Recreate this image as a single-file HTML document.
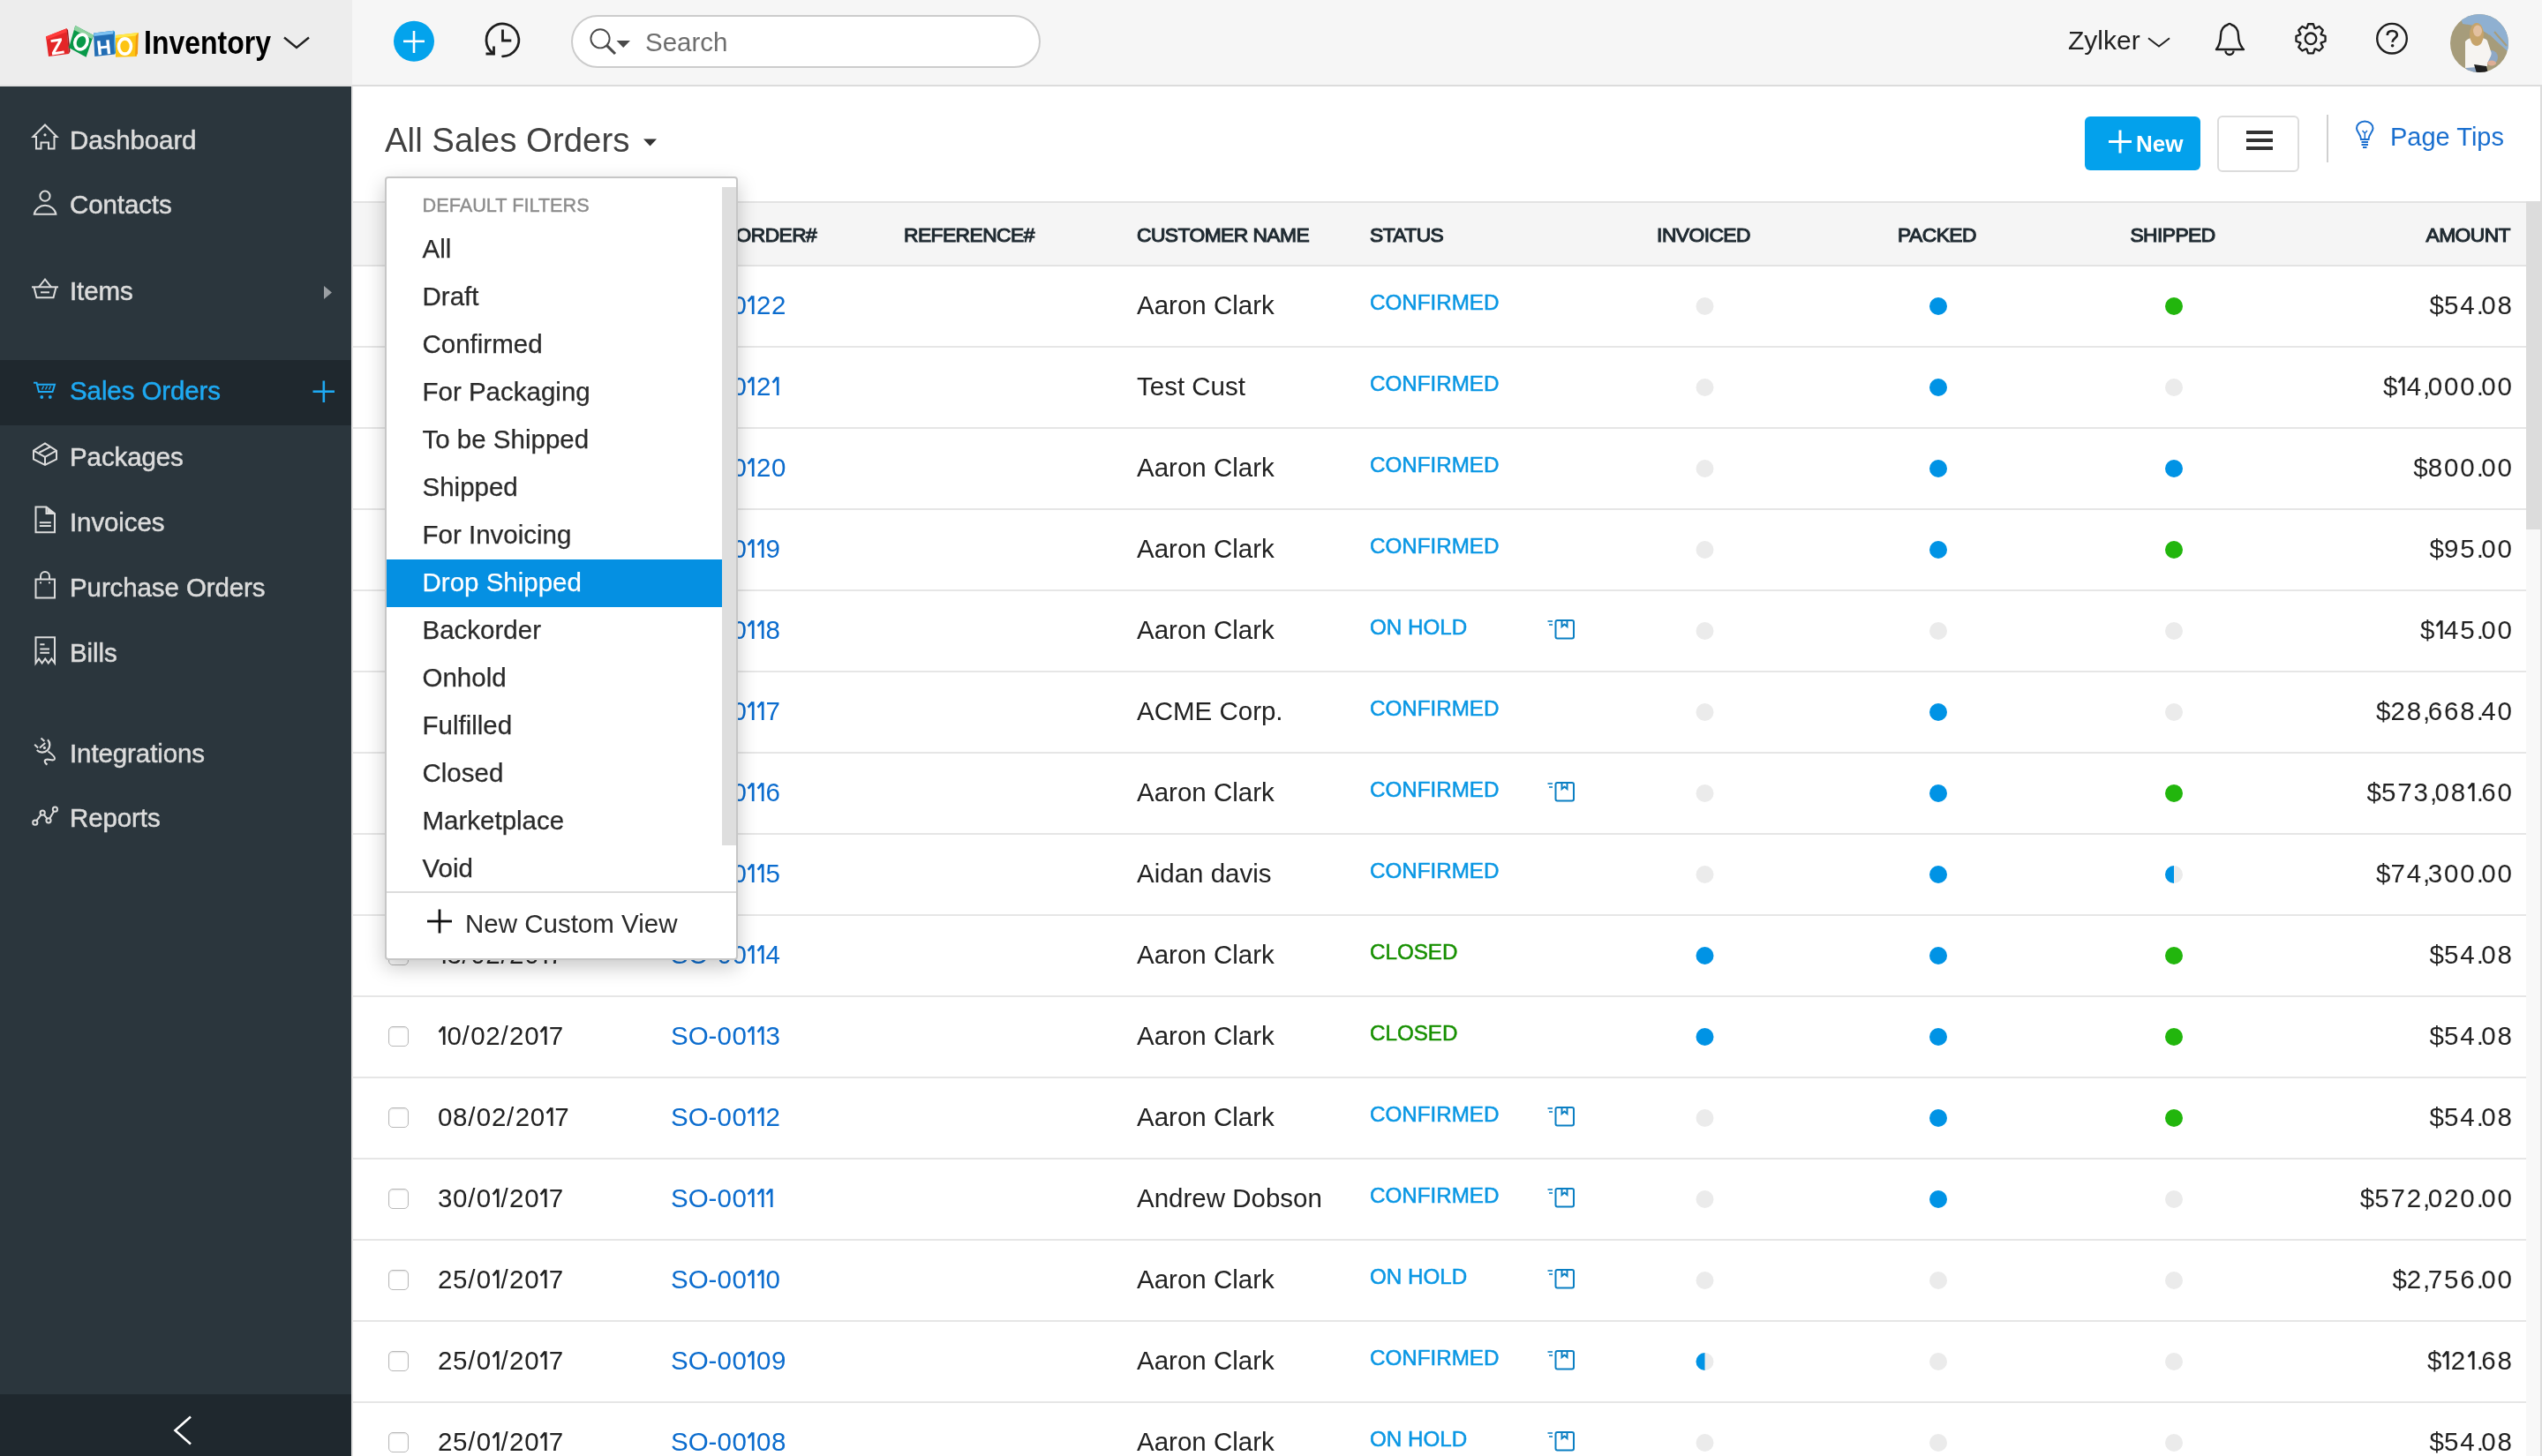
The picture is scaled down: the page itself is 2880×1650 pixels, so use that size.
<!DOCTYPE html>
<html><head><meta charset="utf-8"><title>Sales Orders</title>
<style>
html,body{margin:0;padding:0;width:2880px;height:1650px;overflow:hidden;background:#fff;font-family:"Liberation Sans", sans-serif;}
.t{position:absolute;line-height:1;white-space:nowrap;}
svg{overflow:visible}
</style></head><body>
<div style="position:absolute;left:0;top:0;width:2880px;height:1650px;will-change:transform">

<div style="position:absolute;left:0px;top:0px;width:2880px;height:97px;background:#f6f6f6;"></div>
<div style="position:absolute;left:0px;top:0px;width:399px;height:97px;background:#ededed;"></div>
<div style="position:absolute;left:399px;top:96px;width:2481px;height:2px;background:#dcdcdc;"></div>
<div style="position:absolute;left:0px;top:96px;width:399px;height:2px;background:#e2e2e2;"></div>
<svg style="position:absolute;left:0;top:0;" width="2880" height="1650" viewBox="0 0 2880 1650">
<g>
<polygon points="52,41.5 75.5,32.3 78,61 55,64" fill="#e42527"/>
<polygon points="52,41.5 75.5,32.3 76,36 53,45" fill="#ff3b3b"/>
<polygon points="75.5,32.3 78,61 79.5,58 77,34" fill="#9b1418"/>
<text x="56.5" y="61.5" font-family="Liberation Sans" font-weight="bold" font-size="25" fill="#fff" transform="rotate(-9 64 50)">Z</text>
<polygon points="85.3,29 106,40 97.6,64.7 78,54" fill="#089949"/>
<polygon points="85.3,29 106,40 104,44 84,34" fill="#8fd3a0"/>
<ellipse cx="92" cy="47.5" rx="6.8" ry="8.6" fill="none" stroke="#fff" stroke-width="3.6" transform="rotate(25 92 47.5)"/>
<polygon points="106,37.6 128.7,34.8 130,61.5 107.3,64" fill="#226db4"/>
<polygon points="106,37.6 128.7,34.8 128,38.5 106.5,41" fill="#7cc1f2"/>
<polygon points="128.7,34.8 130,61.5 131,60 130,36" fill="#0b8fe0"/>
<text x="109" y="61.5" font-family="Liberation Sans" font-weight="bold" font-size="23" fill="#fff" transform="rotate(-6 118 50)">H</text>
<polygon points="131,40 156.7,37 155,64 131,64.7" fill="#fdc414"/>
<polygon points="131,40 156.7,37 154,40.5 131,43" fill="#ffe84a"/>
<polygon points="154,40.5 156.7,37 156,61 153,64" fill="#f39b0f"/>
<ellipse cx="141.5" cy="52.5" rx="7" ry="8.6" fill="none" stroke="#fff" stroke-width="3.6"/>
</g></svg>
<div class="t" style="left:163px;top:33.80px;font-size:32px;color:#000;font-weight:bold;transform:scaleY(1.13);transform-origin:0 85%;">Inventory</div>
<svg style="position:absolute;left:0;top:0;" width="2880" height="1650" viewBox="0 0 2880 1650"><polyline points="322,42.5 336,54 350,42.5" fill="none" stroke="#222" stroke-width="2.4"/></svg>
<svg style="position:absolute;left:0;top:0;" width="2880" height="1650" viewBox="0 0 2880 1650"><circle cx="469" cy="46.8" r="23" fill="#03a3ec"/><rect x="457" y="45.5" width="24" height="2.6" fill="#fff"/><rect x="467.7" y="35" width="2.6" height="25" fill="#fff"/></svg>
<svg style="position:absolute;left:0;top:0;" width="2880" height="1650" viewBox="0 0 2880 1650"><g fill="none" stroke="#1e1e1e" stroke-width="2.8" stroke-linecap="round">
<path d="M569.5,63.8 A18.4,18.4 0 1 0 559.3,60.8"/>
<polyline points="569.5,33.5 569.5,46 579.3,46" stroke-linecap="butt"/>
<polyline points="550.5,61 559.5,61 559.5,52.5" stroke-linecap="butt"/>
</g></svg>
<div style="position:absolute;left:647px;top:17px;width:528px;height:56px;border:2px solid #cccccc;border-radius:30px;background:#fff"></div>
<svg style="position:absolute;left:0;top:0;" width="2880" height="1650" viewBox="0 0 2880 1650"><g fill="none" stroke="#4a4a4a" stroke-width="1.9"><circle cx="680" cy="43.8" r="10.6"/><line x1="687.3" y1="51.4" x2="697" y2="61" stroke-width="3.1"/></g>
<polygon points="698.5,46 714,46 706.2,54" fill="#4a4a4a"/></svg>
<div class="t" style="left:731px;top:32.92px;font-size:29.5px;color:#6e6e6e;font-weight:normal;">Search</div>
<div class="t" style="left:2343px;top:30.50px;font-size:30px;color:#222;font-weight:normal;">Zylker</div>
<svg style="position:absolute;left:0;top:0;" width="2880" height="1650" viewBox="0 0 2880 1650"><polyline points="2434,43.2 2446,52.6 2458,43.2" fill="none" stroke="#222" stroke-width="1.9"/></svg>
<svg style="position:absolute;left:0;top:0;" width="2880" height="1650" viewBox="0 0 2880 1650"><g fill="none" stroke="#1e1e1e" stroke-width="2.4" stroke-linejoin="round">
<path d="M2511,56 L2542,56 C2537,51 2536,46 2536,40 C2536,33 2532,29 2528,28 A2.3,2.3 0 0 0 2524,28 C2520,29 2516,33 2516,40 C2516,46 2515,51 2511,56 Z"/>
<path d="M2521.5,57.5 A4.5,4.5 0 0 0 2530.5,57.5"/>
</g></svg>
<svg style="position:absolute;left:0;top:0;" width="2880" height="1650" viewBox="0 0 2880 1650"><g fill="none" stroke="#1e1e1e" stroke-width="2.3" stroke-linejoin="round"><path d="M2613.48,32.04 L2615.08,27.26 L2620.92,27.26 L2622.52,32.04 L2623.12,32.29 L2627.64,30.04 L2631.76,34.16 L2629.51,38.68 L2629.76,39.28 L2634.54,40.88 L2634.54,46.72 L2629.76,48.32 L2629.51,48.92 L2631.76,53.44 L2627.64,57.56 L2623.12,55.31 L2622.52,55.56 L2620.92,60.34 L2615.08,60.34 L2613.48,55.56 L2612.88,55.31 L2608.36,57.56 L2604.24,53.44 L2606.49,48.92 L2606.24,48.32 L2601.46,46.72 L2601.46,40.88 L2606.24,39.28 L2606.49,38.68 L2604.24,34.16 L2608.36,30.04 L2612.88,32.29 Z"/><circle cx="2618" cy="43.8" r="6.3"/></g></svg>
<svg style="position:absolute;left:0;top:0;" width="2880" height="1650" viewBox="0 0 2880 1650"><g fill="none" stroke="#1e1e1e" stroke-width="2.4"><circle cx="2710" cy="43.7" r="16.8"/>
<path d="M2704.8,40 C2704.8,36.5 2707.3,35 2710.3,35 C2713.5,35 2715.8,37 2715.8,39.8 C2715.8,43 2710.6,43.8 2710.6,47.8" stroke-width="2.7"/></g>
<circle cx="2710.6" cy="51.8" r="1.8" fill="#1e1e1e"/></svg>
<svg style="position:absolute;left:0;top:0;" width="2880" height="1650" viewBox="0 0 2880 1650"><defs><clipPath id="av"><circle cx="2809" cy="49" r="33"/></clipPath></defs>
<g clip-path="url(#av)">
<rect x="2775" y="15" width="68" height="68" fill="#a69c7b"/>
<polygon points="2786,15 2843,15 2843,60 2832,50 2818,38 2803,29 2790,27" fill="#8fb0d1"/>
<path d="M2820,40 L2842,62 M2826,36 L2840,52" stroke="#a79c7c" stroke-width="2"/>
<ellipse cx="2822" cy="65" rx="8" ry="8" fill="#8ea8c6"/>
<rect x="2794" y="72" width="16" height="12" fill="#8fa7c4"/>
<path d="M2793,47 C2797,41 2814,41 2818,46 L2822,58 C2825,63 2817,69 2818,75 L2793,77 Z" fill="#f6f4f1"/>
<ellipse cx="2806" cy="39" rx="8" ry="13" fill="#c7a46b"/>
<ellipse cx="2807" cy="35" rx="5" ry="6.5" fill="#e3c0a0"/>
<polygon points="2803,73 2817,75 2819,83 2806,83" fill="#1f1f1f"/>
<ellipse cx="2823" cy="71.5" rx="5" ry="3" fill="#deae96"/>
</g></svg>
<div style="position:absolute;left:0px;top:98px;width:398px;height:1552px;background:#2b363d;"></div>
<div style="position:absolute;left:398px;top:98px;width:2px;height:1552px;background:#e6e6e6;"></div>
<div style="position:absolute;left:0px;top:408px;width:398px;height:74px;background:#1f282e;"></div>
<div style="position:absolute;left:0px;top:1580px;width:398px;height:70px;background:#1f282e;"></div>
<svg style="position:absolute;left:0;top:0;" width="2880" height="1650" viewBox="0 0 2880 1650"><polyline points="216,1605.5 198.5,1621 216,1636.5" fill="none" stroke="#fff" stroke-width="2.6"/></svg>
<div class="t" style="left:79px;top:143.93px;font-size:29.5px;color:#dcdcdc;font-weight:normal;-webkit-text-stroke:0.5px #dcdcdc;letter-spacing:-0.1px;">Dashboard</div>
<div class="t" style="left:79px;top:216.93px;font-size:29.5px;color:#dcdcdc;font-weight:normal;-webkit-text-stroke:0.5px #dcdcdc;letter-spacing:-0.1px;">Contacts</div>
<div class="t" style="left:79px;top:314.93px;font-size:29.5px;color:#dcdcdc;font-weight:normal;-webkit-text-stroke:0.5px #dcdcdc;letter-spacing:-0.1px;">Items</div>
<div class="t" style="left:79px;top:427.93px;font-size:29.5px;color:#1ea9f2;font-weight:normal;-webkit-text-stroke:0.5px #1ea9f2;letter-spacing:-0.1px;">Sales Orders</div>
<div class="t" style="left:79px;top:502.93px;font-size:29.5px;color:#dcdcdc;font-weight:normal;-webkit-text-stroke:0.5px #dcdcdc;letter-spacing:-0.1px;">Packages</div>
<div class="t" style="left:79px;top:576.92px;font-size:29.5px;color:#dcdcdc;font-weight:normal;-webkit-text-stroke:0.5px #dcdcdc;letter-spacing:-0.1px;">Invoices</div>
<div class="t" style="left:79px;top:650.92px;font-size:29.5px;color:#dcdcdc;font-weight:normal;-webkit-text-stroke:0.5px #dcdcdc;letter-spacing:-0.1px;">Purchase Orders</div>
<div class="t" style="left:79px;top:724.92px;font-size:29.5px;color:#dcdcdc;font-weight:normal;-webkit-text-stroke:0.5px #dcdcdc;letter-spacing:-0.1px;">Bills</div>
<div class="t" style="left:79px;top:838.92px;font-size:29.5px;color:#dcdcdc;font-weight:normal;-webkit-text-stroke:0.5px #dcdcdc;letter-spacing:-0.1px;">Integrations</div>
<div class="t" style="left:79px;top:912.42px;font-size:29.5px;color:#dcdcdc;font-weight:normal;-webkit-text-stroke:0.5px #dcdcdc;letter-spacing:-0.1px;">Reports</div>
<svg style="position:absolute;left:0;top:0;" width="2880" height="1650" viewBox="0 0 2880 1650"><polygon points="367,324 376,331.5 367,339" fill="#9a9fa3"/></svg>
<svg style="position:absolute;left:0;top:0;" width="2880" height="1650" viewBox="0 0 2880 1650"><g stroke="#1ea9f2" stroke-width="2.6"><line x1="366.8" y1="431.5" x2="366.8" y2="456"/><line x1="354.5" y1="443.7" x2="379" y2="443.7"/></g></svg>
<svg style="position:absolute;left:0;top:0;" width="2880" height="1650" viewBox="0 0 2880 1650"><g fill="none" stroke="#dcdcdc" stroke-width="2" stroke-linejoin="miter">
<path d="M37.5,155 L51,141.5 L64.5,155 L61.5,155 L61.5,168.5 L55,168.5 L55,161.5 L46.5,161.5 L46.5,168.5 L41,168.5 L41,155 Z"/>
<circle cx="51" cy="222.2" r="5.6"/>
<path d="M38.8,242.8 A12.4,11.4 0 0 1 63.4,242.8 Z"/>
<path d="M44,325.3 L51,316.5 L58,325.3"/>
<line x1="36" y1="325.3" x2="66" y2="325.3"/>
<path d="M38.5,325.3 L41.5,337.3 L60.5,337.3 L63.5,325.3"/>
<line x1="46" y1="331.3" x2="56" y2="331.3"/>
<path d="M38,510.7 L51,502.5 L64,510.7 L64,520.5 L51,527 L38,520.5 Z"/>
<path d="M38,510.7 L51,517.9 L64,510.7 M51,517.9 L51,527"/>
<path d="M44.3,513 L57,506.3"/>
<path d="M40.5,574.5 L52.5,574.5 L62,582 L62,603.3 L40.5,603.3 Z"/>
<path d="M52.5,574.5 L52.5,582 L62,582" />
<line x1="44.8" y1="592.2" x2="57.8" y2="592.2"/>
<line x1="44.8" y1="596" x2="57.8" y2="596"/>
<rect x="40.5" y="656.5" width="21.5" height="21" />
<path d="M46,656.5 L46,653 A5,5 0 0 1 56,653 L56,656.5"/>
<path d="M40.5,751.5 L40.5,722.3 L62,722.3 L62,751.5 L58.4,746.5 L54.8,751.5 L51.2,746.5 L47.6,751.5 L44,746.5 Z"/>
<line x1="45.3" y1="730.3" x2="50.5" y2="730.3"/>
<line x1="45.3" y1="735.5" x2="56" y2="735.5"/>
<line x1="45.3" y1="739.8" x2="56" y2="739.8"/>
<path d="M41.8,850 A8.45,8.45 0 0 0 54,838.3" stroke-width="2.2"/>
<path d="M39.2,843.7 L43.1,847.4 M46.5,836.4 L50.4,840.1 M45,847.6 L51.2,842"/>
<path d="M54.5,851.5 C58,854 63.5,858 61.8,860.5 C60,863 55,859.5 51.8,861 C49.8,862 51,865 53.5,866.5" stroke-width="2.1"/>
<polyline points="39.8,932.2 48.2,921.2 55,929.8 62.4,917.2"/>
<circle cx="39.8" cy="932.2" r="2.6" fill="#2b363d"/>
<circle cx="48.2" cy="921.2" r="2.6" fill="#2b363d"/>
<circle cx="55" cy="929.8" r="2.6" fill="#2b363d"/>
<circle cx="62.4" cy="917.2" r="2.6" fill="#2b363d"/>
</g>
<circle cx="51" cy="152.8" r="1.6" fill="#dcdcdc"/>
<circle cx="46" cy="660.4" r="1.1" fill="#dcdcdc"/>
<circle cx="56" cy="660.4" r="1.1" fill="#dcdcdc"/>
<circle cx="50.4" cy="847.4" r="1.6" fill="#dcdcdc"/>
<polygon points="53.5,575.5 61,581.5 53.5,581.5" fill="#dcdcdc"/>
<g fill="none" stroke="#1ea9f2" stroke-width="2">
<path d="M38,433.8 L41.5,433.8 L44,444 L59.5,444 L62,435.8 L43,435.8"/>
<path d="M47.5,441.5 L49.5,437.5 M51.5,441.5 L53.5,437.5 M55.5,441.5 L57.5,437.5" stroke-width="1.4"/>
</g>
<circle cx="47.3" cy="450" r="1.9" fill="#1ea9f2"/>
<circle cx="56.8" cy="450" r="1.9" fill="#1ea9f2"/>
</svg>
<div style="position:absolute;left:2878px;top:98px;width:2px;height:1552px;background:#dcdcdc;"></div>
<div class="t" style="left:436px;top:139.86px;font-size:38.4px;color:#404040;font-weight:normal;">All Sales Orders</div>
<svg style="position:absolute;left:0;top:0;" width="2880" height="1650" viewBox="0 0 2880 1650"><polygon points="729,157.5 744,157.5 736.5,165.5" fill="#333"/></svg>
<div style="position:absolute;left:2362px;top:132px;width:131px;height:61px;border-radius:6px;background:#03a1ec"></div>
<svg style="position:absolute;left:0;top:0;" width="2880" height="1650" viewBox="0 0 2880 1650"><g stroke="#fff" stroke-width="3"><line x1="2402" y1="147.5" x2="2402" y2="173.5"/><line x1="2389" y1="160.5" x2="2415" y2="160.5"/></g></svg>
<div class="t" style="left:2420px;top:149.90px;font-size:26px;color:#fff;font-weight:bold;">New</div>
<div style="position:absolute;left:2512px;top:130.5px;width:89px;height:60.5px;border:2px solid #dcdcdc;border-radius:6px;background:#fff"></div>
<div style="position:absolute;left:2544.5px;top:148px;width:30.5px;height:3.5px;background:#333;"></div>
<div style="position:absolute;left:2544.5px;top:157.3px;width:30.5px;height:3.5px;background:#333;"></div>
<div style="position:absolute;left:2544.5px;top:166.3px;width:30.5px;height:3.5px;background:#333;"></div>
<div style="position:absolute;left:2636px;top:130px;width:2px;height:54px;background:#d0d0d0;"></div>
<svg style="position:absolute;left:0;top:0;" width="2880" height="1650" viewBox="0 0 2880 1650"><g fill="none" stroke="#1a6fcf" stroke-width="2"><path d="M2675,158 C2675,152 2670,149.5 2670,145.5 A9.2,8 0 0 1 2688.5,145.5 C2688.5,149.5 2683.5,152 2683.5,158 Z"/>
<path d="M2676.5,148 L2679.3,151 L2682,148 M2679.3,151 L2679.3,158" stroke-width="1.5"/>
<line x1="2675.5" y1="161" x2="2683" y2="161"/><line x1="2675.5" y1="164" x2="2683" y2="164"/><line x1="2677" y1="167" x2="2681.5" y2="167"/></g></svg>
<div class="t" style="left:2708px;top:140.85px;font-size:29px;color:#1a6fcf;font-weight:normal;">Page Tips</div>
<div style="position:absolute;left:400px;top:228px;width:2462px;height:74px;background:#f5f5f5;"></div>
<div style="position:absolute;left:400px;top:228px;width:2462px;height:2px;background:#e3e3e3;"></div>
<div style="position:absolute;left:400px;top:300px;width:2462px;height:2px;background:#e3e3e3;"></div>
<div class="t" style="left:496px;top:255.12px;font-size:22.8px;color:#1f2a31;font-weight:normal;-webkit-text-stroke:1.1px #1f2a31;letter-spacing:-0.55px;">DATE</div>
<div class="t" style="left:757px;top:255.12px;font-size:22.8px;color:#1f2a31;font-weight:normal;-webkit-text-stroke:1.1px #1f2a31;letter-spacing:-0.55px;">SALES ORDER#</div>
<div class="t" style="left:1024px;top:255.12px;font-size:22.8px;color:#1f2a31;font-weight:normal;-webkit-text-stroke:1.1px #1f2a31;letter-spacing:-0.55px;">REFERENCE#</div>
<div class="t" style="left:1288px;top:255.12px;font-size:22.8px;color:#1f2a31;font-weight:normal;-webkit-text-stroke:1.1px #1f2a31;letter-spacing:-0.55px;">CUSTOMER NAME</div>
<div class="t" style="left:1552px;top:255.12px;font-size:22.8px;color:#1f2a31;font-weight:normal;-webkit-text-stroke:1.1px #1f2a31;letter-spacing:-0.55px;">STATUS</div>
<div class="t" style="left:1630.0px;width:600px;text-align:center;top:255.12px;font-size:22.8px;color:#1f2a31;font-weight:normal;-webkit-text-stroke:1.1px #1f2a31;letter-spacing:-0.55px;">INVOICED</div>
<div class="t" style="left:1894.5px;width:600px;text-align:center;top:255.12px;font-size:22.8px;color:#1f2a31;font-weight:normal;-webkit-text-stroke:1.1px #1f2a31;letter-spacing:-0.55px;">PACKED</div>
<div class="t" style="left:2161.5px;width:600px;text-align:center;top:255.12px;font-size:22.8px;color:#1f2a31;font-weight:normal;-webkit-text-stroke:1.1px #1f2a31;letter-spacing:-0.55px;">SHIPPED</div>
<div class="t" style="right:36px;top:255.12px;font-size:22.8px;color:#1f2a31;font-weight:normal;-webkit-text-stroke:1.1px #1f2a31;letter-spacing:-0.55px;">AMOUNT</div>
<div style="position:absolute;left:2862px;top:228px;width:16px;height:1422px;background:#f8f8f8;"></div>
<div style="position:absolute;left:2862px;top:228px;width:16px;height:372px;background:#dcdcdc;"></div>
<div style="position:absolute;left:400px;top:392px;width:2462px;height:2px;background:#e6e6e6;"></div>
<div style="position:absolute;left:440.3px;top:335.3px;width:20.4px;height:20.4px;border:1.5px solid #b9b9b9;border-radius:5px;background:#fff;box-shadow:inset 0 1px 1.5px rgba(0,0,0,0.12)"></div>
<div class="t" style="left:496px;top:330.93px;font-size:29.5px;color:#222;font-weight:normal;"><span style="letter-spacing:0.65px">0</span><svg width="10.5" height="21" viewBox="0 0 10.5 21" style="vertical-align:baseline;overflow:visible"><path d="M7.2,0.2 V21 M6.6,0.6 L1.6,6.6" stroke="currentColor" stroke-width="2.7" fill="none"/></svg><span style="letter-spacing:1.50px">/</span><span style="letter-spacing:0.65px">0</span><svg width="10.5" height="21" viewBox="0 0 10.5 21" style="vertical-align:baseline;overflow:visible"><path d="M7.2,0.2 V21 M6.6,0.6 L1.6,6.6" stroke="currentColor" stroke-width="2.7" fill="none"/></svg><span style="letter-spacing:1.50px">/</span><span style="letter-spacing:0.65px">2</span><span style="letter-spacing:0.65px">0</span><svg width="10.5" height="21" viewBox="0 0 10.5 21" style="vertical-align:baseline;overflow:visible"><path d="M7.2,0.2 V21 M6.6,0.6 L1.6,6.6" stroke="currentColor" stroke-width="2.7" fill="none"/></svg>7</div>
<div class="t" style="left:760px;top:330.93px;font-size:29.5px;color:#0b6cce;font-weight:normal;">SO-<span style="letter-spacing:0.60px">0</span><span style="letter-spacing:0.60px">0</span><svg width="10.5" height="21" viewBox="0 0 10.5 21" style="vertical-align:baseline;overflow:visible"><path d="M7.2,0.2 V21 M6.6,0.6 L1.6,6.6" stroke="currentColor" stroke-width="2.7" fill="none"/></svg><span style="letter-spacing:0.60px">2</span>2</div>
<div class="t" style="left:1288px;top:330.93px;font-size:29.5px;color:#222;font-weight:normal;">Aaron Clark</div>
<div class="t" style="left:1552px;top:331.23px;font-size:24.2px;color:#0a97e4;font-weight:normal;-webkit-text-stroke:0.5px #0a97e4;">CONFIRMED</div>
<div class="t" style="right:34px;top:330.93px;font-size:29.5px;color:#222;font-weight:normal;">$<span style="letter-spacing:1.90px">5</span><span style="letter-spacing:1.90px">4</span><span style="letter-spacing:-2.60px">.</span><span style="letter-spacing:1.90px">0</span>8</div>
<div style="position:absolute;left:400px;top:484px;width:2462px;height:2px;background:#e6e6e6;"></div>
<div style="position:absolute;left:440.3px;top:427.3px;width:20.4px;height:20.4px;border:1.5px solid #b9b9b9;border-radius:5px;background:#fff;box-shadow:inset 0 1px 1.5px rgba(0,0,0,0.12)"></div>
<div class="t" style="left:496px;top:422.93px;font-size:29.5px;color:#222;font-weight:normal;"><span style="letter-spacing:0.65px">0</span><svg width="10.5" height="21" viewBox="0 0 10.5 21" style="vertical-align:baseline;overflow:visible"><path d="M7.2,0.2 V21 M6.6,0.6 L1.6,6.6" stroke="currentColor" stroke-width="2.7" fill="none"/></svg><span style="letter-spacing:1.50px">/</span><span style="letter-spacing:0.65px">0</span><svg width="10.5" height="21" viewBox="0 0 10.5 21" style="vertical-align:baseline;overflow:visible"><path d="M7.2,0.2 V21 M6.6,0.6 L1.6,6.6" stroke="currentColor" stroke-width="2.7" fill="none"/></svg><span style="letter-spacing:1.50px">/</span><span style="letter-spacing:0.65px">2</span><span style="letter-spacing:0.65px">0</span><svg width="10.5" height="21" viewBox="0 0 10.5 21" style="vertical-align:baseline;overflow:visible"><path d="M7.2,0.2 V21 M6.6,0.6 L1.6,6.6" stroke="currentColor" stroke-width="2.7" fill="none"/></svg>7</div>
<div class="t" style="left:760px;top:422.93px;font-size:29.5px;color:#0b6cce;font-weight:normal;">SO-<span style="letter-spacing:0.60px">0</span><span style="letter-spacing:0.60px">0</span><svg width="10.5" height="21" viewBox="0 0 10.5 21" style="vertical-align:baseline;overflow:visible"><path d="M7.2,0.2 V21 M6.6,0.6 L1.6,6.6" stroke="currentColor" stroke-width="2.7" fill="none"/></svg><span style="letter-spacing:0.60px">2</span><svg width="10.5" height="21" viewBox="0 0 10.5 21" style="vertical-align:baseline;overflow:visible"><path d="M7.2,0.2 V21 M6.6,0.6 L1.6,6.6" stroke="currentColor" stroke-width="2.7" fill="none"/></svg></div>
<div class="t" style="left:1288px;top:422.93px;font-size:29.5px;color:#222;font-weight:normal;">Test Cust</div>
<div class="t" style="left:1552px;top:423.23px;font-size:24.2px;color:#0a97e4;font-weight:normal;-webkit-text-stroke:0.5px #0a97e4;">CONFIRMED</div>
<div class="t" style="right:34px;top:422.93px;font-size:29.5px;color:#222;font-weight:normal;">$<svg width="10.5" height="21" viewBox="0 0 10.5 21" style="vertical-align:baseline;overflow:visible"><path d="M7.2,0.2 V21 M6.6,0.6 L1.6,6.6" stroke="currentColor" stroke-width="2.7" fill="none"/></svg><span style="letter-spacing:1.90px">4</span><span style="letter-spacing:-2.60px">,</span><span style="letter-spacing:1.90px">0</span><span style="letter-spacing:1.90px">0</span><span style="letter-spacing:1.90px">0</span><span style="letter-spacing:-2.60px">.</span><span style="letter-spacing:1.90px">0</span>0</div>
<div style="position:absolute;left:400px;top:576px;width:2462px;height:2px;background:#e6e6e6;"></div>
<div style="position:absolute;left:440.3px;top:519.3px;width:20.4px;height:20.4px;border:1.5px solid #b9b9b9;border-radius:5px;background:#fff;box-shadow:inset 0 1px 1.5px rgba(0,0,0,0.12)"></div>
<div class="t" style="left:496px;top:514.92px;font-size:29.5px;color:#222;font-weight:normal;"><span style="letter-spacing:0.65px">0</span><svg width="10.5" height="21" viewBox="0 0 10.5 21" style="vertical-align:baseline;overflow:visible"><path d="M7.2,0.2 V21 M6.6,0.6 L1.6,6.6" stroke="currentColor" stroke-width="2.7" fill="none"/></svg><span style="letter-spacing:1.50px">/</span><span style="letter-spacing:0.65px">0</span><svg width="10.5" height="21" viewBox="0 0 10.5 21" style="vertical-align:baseline;overflow:visible"><path d="M7.2,0.2 V21 M6.6,0.6 L1.6,6.6" stroke="currentColor" stroke-width="2.7" fill="none"/></svg><span style="letter-spacing:1.50px">/</span><span style="letter-spacing:0.65px">2</span><span style="letter-spacing:0.65px">0</span><svg width="10.5" height="21" viewBox="0 0 10.5 21" style="vertical-align:baseline;overflow:visible"><path d="M7.2,0.2 V21 M6.6,0.6 L1.6,6.6" stroke="currentColor" stroke-width="2.7" fill="none"/></svg>7</div>
<div class="t" style="left:760px;top:514.92px;font-size:29.5px;color:#0b6cce;font-weight:normal;">SO-<span style="letter-spacing:0.60px">0</span><span style="letter-spacing:0.60px">0</span><svg width="10.5" height="21" viewBox="0 0 10.5 21" style="vertical-align:baseline;overflow:visible"><path d="M7.2,0.2 V21 M6.6,0.6 L1.6,6.6" stroke="currentColor" stroke-width="2.7" fill="none"/></svg><span style="letter-spacing:0.60px">2</span>0</div>
<div class="t" style="left:1288px;top:514.92px;font-size:29.5px;color:#222;font-weight:normal;">Aaron Clark</div>
<div class="t" style="left:1552px;top:515.23px;font-size:24.2px;color:#0a97e4;font-weight:normal;-webkit-text-stroke:0.5px #0a97e4;">CONFIRMED</div>
<div class="t" style="right:34px;top:514.92px;font-size:29.5px;color:#222;font-weight:normal;">$<span style="letter-spacing:1.90px">8</span><span style="letter-spacing:1.90px">0</span><span style="letter-spacing:1.90px">0</span><span style="letter-spacing:-2.60px">.</span><span style="letter-spacing:1.90px">0</span>0</div>
<div style="position:absolute;left:400px;top:668px;width:2462px;height:2px;background:#e6e6e6;"></div>
<div style="position:absolute;left:440.3px;top:611.3px;width:20.4px;height:20.4px;border:1.5px solid #b9b9b9;border-radius:5px;background:#fff;box-shadow:inset 0 1px 1.5px rgba(0,0,0,0.12)"></div>
<div class="t" style="left:496px;top:606.92px;font-size:29.5px;color:#222;font-weight:normal;"><span style="letter-spacing:0.65px">0</span><svg width="10.5" height="21" viewBox="0 0 10.5 21" style="vertical-align:baseline;overflow:visible"><path d="M7.2,0.2 V21 M6.6,0.6 L1.6,6.6" stroke="currentColor" stroke-width="2.7" fill="none"/></svg><span style="letter-spacing:1.50px">/</span><span style="letter-spacing:0.65px">0</span><svg width="10.5" height="21" viewBox="0 0 10.5 21" style="vertical-align:baseline;overflow:visible"><path d="M7.2,0.2 V21 M6.6,0.6 L1.6,6.6" stroke="currentColor" stroke-width="2.7" fill="none"/></svg><span style="letter-spacing:1.50px">/</span><span style="letter-spacing:0.65px">2</span><span style="letter-spacing:0.65px">0</span><svg width="10.5" height="21" viewBox="0 0 10.5 21" style="vertical-align:baseline;overflow:visible"><path d="M7.2,0.2 V21 M6.6,0.6 L1.6,6.6" stroke="currentColor" stroke-width="2.7" fill="none"/></svg>7</div>
<div class="t" style="left:760px;top:606.92px;font-size:29.5px;color:#0b6cce;font-weight:normal;">SO-<span style="letter-spacing:0.60px">0</span><span style="letter-spacing:0.60px">0</span><svg width="10.5" height="21" viewBox="0 0 10.5 21" style="vertical-align:baseline;overflow:visible"><path d="M7.2,0.2 V21 M6.6,0.6 L1.6,6.6" stroke="currentColor" stroke-width="2.7" fill="none"/></svg><svg width="10.5" height="21" viewBox="0 0 10.5 21" style="vertical-align:baseline;overflow:visible"><path d="M7.2,0.2 V21 M6.6,0.6 L1.6,6.6" stroke="currentColor" stroke-width="2.7" fill="none"/></svg>9</div>
<div class="t" style="left:1288px;top:606.92px;font-size:29.5px;color:#222;font-weight:normal;">Aaron Clark</div>
<div class="t" style="left:1552px;top:607.23px;font-size:24.2px;color:#0a97e4;font-weight:normal;-webkit-text-stroke:0.5px #0a97e4;">CONFIRMED</div>
<div class="t" style="right:34px;top:606.92px;font-size:29.5px;color:#222;font-weight:normal;">$<span style="letter-spacing:1.90px">9</span><span style="letter-spacing:1.90px">5</span><span style="letter-spacing:-2.60px">.</span><span style="letter-spacing:1.90px">0</span>0</div>
<div style="position:absolute;left:400px;top:760px;width:2462px;height:2px;background:#e6e6e6;"></div>
<div style="position:absolute;left:440.3px;top:703.3px;width:20.4px;height:20.4px;border:1.5px solid #b9b9b9;border-radius:5px;background:#fff;box-shadow:inset 0 1px 1.5px rgba(0,0,0,0.12)"></div>
<div class="t" style="left:496px;top:698.92px;font-size:29.5px;color:#222;font-weight:normal;"><span style="letter-spacing:0.65px">0</span><svg width="10.5" height="21" viewBox="0 0 10.5 21" style="vertical-align:baseline;overflow:visible"><path d="M7.2,0.2 V21 M6.6,0.6 L1.6,6.6" stroke="currentColor" stroke-width="2.7" fill="none"/></svg><span style="letter-spacing:1.50px">/</span><span style="letter-spacing:0.65px">0</span><svg width="10.5" height="21" viewBox="0 0 10.5 21" style="vertical-align:baseline;overflow:visible"><path d="M7.2,0.2 V21 M6.6,0.6 L1.6,6.6" stroke="currentColor" stroke-width="2.7" fill="none"/></svg><span style="letter-spacing:1.50px">/</span><span style="letter-spacing:0.65px">2</span><span style="letter-spacing:0.65px">0</span><svg width="10.5" height="21" viewBox="0 0 10.5 21" style="vertical-align:baseline;overflow:visible"><path d="M7.2,0.2 V21 M6.6,0.6 L1.6,6.6" stroke="currentColor" stroke-width="2.7" fill="none"/></svg>7</div>
<div class="t" style="left:760px;top:698.92px;font-size:29.5px;color:#0b6cce;font-weight:normal;">SO-<span style="letter-spacing:0.60px">0</span><span style="letter-spacing:0.60px">0</span><svg width="10.5" height="21" viewBox="0 0 10.5 21" style="vertical-align:baseline;overflow:visible"><path d="M7.2,0.2 V21 M6.6,0.6 L1.6,6.6" stroke="currentColor" stroke-width="2.7" fill="none"/></svg><svg width="10.5" height="21" viewBox="0 0 10.5 21" style="vertical-align:baseline;overflow:visible"><path d="M7.2,0.2 V21 M6.6,0.6 L1.6,6.6" stroke="currentColor" stroke-width="2.7" fill="none"/></svg>8</div>
<div class="t" style="left:1288px;top:698.92px;font-size:29.5px;color:#222;font-weight:normal;">Aaron Clark</div>
<div class="t" style="left:1552px;top:699.23px;font-size:24.2px;color:#0a97e4;font-weight:normal;-webkit-text-stroke:0.5px #0a97e4;">ON HOLD</div>
<div class="t" style="right:34px;top:698.92px;font-size:29.5px;color:#222;font-weight:normal;">$<svg width="10.5" height="21" viewBox="0 0 10.5 21" style="vertical-align:baseline;overflow:visible"><path d="M7.2,0.2 V21 M6.6,0.6 L1.6,6.6" stroke="currentColor" stroke-width="2.7" fill="none"/></svg><span style="letter-spacing:1.90px">4</span><span style="letter-spacing:1.90px">5</span><span style="letter-spacing:-2.60px">.</span><span style="letter-spacing:1.90px">0</span>0</div>
<div style="position:absolute;left:400px;top:852px;width:2462px;height:2px;background:#e6e6e6;"></div>
<div style="position:absolute;left:440.3px;top:795.3px;width:20.4px;height:20.4px;border:1.5px solid #b9b9b9;border-radius:5px;background:#fff;box-shadow:inset 0 1px 1.5px rgba(0,0,0,0.12)"></div>
<div class="t" style="left:496px;top:790.92px;font-size:29.5px;color:#222;font-weight:normal;"><span style="letter-spacing:0.65px">0</span><svg width="10.5" height="21" viewBox="0 0 10.5 21" style="vertical-align:baseline;overflow:visible"><path d="M7.2,0.2 V21 M6.6,0.6 L1.6,6.6" stroke="currentColor" stroke-width="2.7" fill="none"/></svg><span style="letter-spacing:1.50px">/</span><span style="letter-spacing:0.65px">0</span><svg width="10.5" height="21" viewBox="0 0 10.5 21" style="vertical-align:baseline;overflow:visible"><path d="M7.2,0.2 V21 M6.6,0.6 L1.6,6.6" stroke="currentColor" stroke-width="2.7" fill="none"/></svg><span style="letter-spacing:1.50px">/</span><span style="letter-spacing:0.65px">2</span><span style="letter-spacing:0.65px">0</span><svg width="10.5" height="21" viewBox="0 0 10.5 21" style="vertical-align:baseline;overflow:visible"><path d="M7.2,0.2 V21 M6.6,0.6 L1.6,6.6" stroke="currentColor" stroke-width="2.7" fill="none"/></svg>7</div>
<div class="t" style="left:760px;top:790.92px;font-size:29.5px;color:#0b6cce;font-weight:normal;">SO-<span style="letter-spacing:0.60px">0</span><span style="letter-spacing:0.60px">0</span><svg width="10.5" height="21" viewBox="0 0 10.5 21" style="vertical-align:baseline;overflow:visible"><path d="M7.2,0.2 V21 M6.6,0.6 L1.6,6.6" stroke="currentColor" stroke-width="2.7" fill="none"/></svg><svg width="10.5" height="21" viewBox="0 0 10.5 21" style="vertical-align:baseline;overflow:visible"><path d="M7.2,0.2 V21 M6.6,0.6 L1.6,6.6" stroke="currentColor" stroke-width="2.7" fill="none"/></svg>7</div>
<div class="t" style="left:1288px;top:790.92px;font-size:29.5px;color:#222;font-weight:normal;">ACME Corp.</div>
<div class="t" style="left:1552px;top:791.23px;font-size:24.2px;color:#0a97e4;font-weight:normal;-webkit-text-stroke:0.5px #0a97e4;">CONFIRMED</div>
<div class="t" style="right:34px;top:790.92px;font-size:29.5px;color:#222;font-weight:normal;">$<span style="letter-spacing:1.90px">2</span><span style="letter-spacing:1.90px">8</span><span style="letter-spacing:-2.60px">,</span><span style="letter-spacing:1.90px">6</span><span style="letter-spacing:1.90px">6</span><span style="letter-spacing:1.90px">8</span><span style="letter-spacing:-2.60px">.</span><span style="letter-spacing:1.90px">4</span>0</div>
<div style="position:absolute;left:400px;top:944px;width:2462px;height:2px;background:#e6e6e6;"></div>
<div style="position:absolute;left:440.3px;top:887.3px;width:20.4px;height:20.4px;border:1.5px solid #b9b9b9;border-radius:5px;background:#fff;box-shadow:inset 0 1px 1.5px rgba(0,0,0,0.12)"></div>
<div class="t" style="left:496px;top:882.92px;font-size:29.5px;color:#222;font-weight:normal;"><span style="letter-spacing:0.65px">0</span><svg width="10.5" height="21" viewBox="0 0 10.5 21" style="vertical-align:baseline;overflow:visible"><path d="M7.2,0.2 V21 M6.6,0.6 L1.6,6.6" stroke="currentColor" stroke-width="2.7" fill="none"/></svg><span style="letter-spacing:1.50px">/</span><span style="letter-spacing:0.65px">0</span><svg width="10.5" height="21" viewBox="0 0 10.5 21" style="vertical-align:baseline;overflow:visible"><path d="M7.2,0.2 V21 M6.6,0.6 L1.6,6.6" stroke="currentColor" stroke-width="2.7" fill="none"/></svg><span style="letter-spacing:1.50px">/</span><span style="letter-spacing:0.65px">2</span><span style="letter-spacing:0.65px">0</span><svg width="10.5" height="21" viewBox="0 0 10.5 21" style="vertical-align:baseline;overflow:visible"><path d="M7.2,0.2 V21 M6.6,0.6 L1.6,6.6" stroke="currentColor" stroke-width="2.7" fill="none"/></svg>7</div>
<div class="t" style="left:760px;top:882.92px;font-size:29.5px;color:#0b6cce;font-weight:normal;">SO-<span style="letter-spacing:0.60px">0</span><span style="letter-spacing:0.60px">0</span><svg width="10.5" height="21" viewBox="0 0 10.5 21" style="vertical-align:baseline;overflow:visible"><path d="M7.2,0.2 V21 M6.6,0.6 L1.6,6.6" stroke="currentColor" stroke-width="2.7" fill="none"/></svg><svg width="10.5" height="21" viewBox="0 0 10.5 21" style="vertical-align:baseline;overflow:visible"><path d="M7.2,0.2 V21 M6.6,0.6 L1.6,6.6" stroke="currentColor" stroke-width="2.7" fill="none"/></svg>6</div>
<div class="t" style="left:1288px;top:882.92px;font-size:29.5px;color:#222;font-weight:normal;">Aaron Clark</div>
<div class="t" style="left:1552px;top:883.23px;font-size:24.2px;color:#0a97e4;font-weight:normal;-webkit-text-stroke:0.5px #0a97e4;">CONFIRMED</div>
<div class="t" style="right:34px;top:882.92px;font-size:29.5px;color:#222;font-weight:normal;">$<span style="letter-spacing:1.90px">5</span><span style="letter-spacing:1.90px">7</span><span style="letter-spacing:1.90px">3</span><span style="letter-spacing:-2.60px">,</span><span style="letter-spacing:1.90px">0</span><span style="letter-spacing:1.90px">8</span><svg width="10.5" height="21" viewBox="0 0 10.5 21" style="vertical-align:baseline;overflow:visible"><path d="M7.2,0.2 V21 M6.6,0.6 L1.6,6.6" stroke="currentColor" stroke-width="2.7" fill="none"/></svg><span style="letter-spacing:-2.60px">.</span><span style="letter-spacing:1.90px">6</span>0</div>
<div style="position:absolute;left:400px;top:1036px;width:2462px;height:2px;background:#e6e6e6;"></div>
<div style="position:absolute;left:440.3px;top:979.3px;width:20.4px;height:20.4px;border:1.5px solid #b9b9b9;border-radius:5px;background:#fff;box-shadow:inset 0 1px 1.5px rgba(0,0,0,0.12)"></div>
<div class="t" style="left:496px;top:974.92px;font-size:29.5px;color:#222;font-weight:normal;"><span style="letter-spacing:0.65px">0</span><svg width="10.5" height="21" viewBox="0 0 10.5 21" style="vertical-align:baseline;overflow:visible"><path d="M7.2,0.2 V21 M6.6,0.6 L1.6,6.6" stroke="currentColor" stroke-width="2.7" fill="none"/></svg><span style="letter-spacing:1.50px">/</span><span style="letter-spacing:0.65px">0</span><svg width="10.5" height="21" viewBox="0 0 10.5 21" style="vertical-align:baseline;overflow:visible"><path d="M7.2,0.2 V21 M6.6,0.6 L1.6,6.6" stroke="currentColor" stroke-width="2.7" fill="none"/></svg><span style="letter-spacing:1.50px">/</span><span style="letter-spacing:0.65px">2</span><span style="letter-spacing:0.65px">0</span><svg width="10.5" height="21" viewBox="0 0 10.5 21" style="vertical-align:baseline;overflow:visible"><path d="M7.2,0.2 V21 M6.6,0.6 L1.6,6.6" stroke="currentColor" stroke-width="2.7" fill="none"/></svg>7</div>
<div class="t" style="left:760px;top:974.92px;font-size:29.5px;color:#0b6cce;font-weight:normal;">SO-<span style="letter-spacing:0.60px">0</span><span style="letter-spacing:0.60px">0</span><svg width="10.5" height="21" viewBox="0 0 10.5 21" style="vertical-align:baseline;overflow:visible"><path d="M7.2,0.2 V21 M6.6,0.6 L1.6,6.6" stroke="currentColor" stroke-width="2.7" fill="none"/></svg><svg width="10.5" height="21" viewBox="0 0 10.5 21" style="vertical-align:baseline;overflow:visible"><path d="M7.2,0.2 V21 M6.6,0.6 L1.6,6.6" stroke="currentColor" stroke-width="2.7" fill="none"/></svg>5</div>
<div class="t" style="left:1288px;top:974.92px;font-size:29.5px;color:#222;font-weight:normal;">Aidan davis</div>
<div class="t" style="left:1552px;top:975.23px;font-size:24.2px;color:#0a97e4;font-weight:normal;-webkit-text-stroke:0.5px #0a97e4;">CONFIRMED</div>
<div class="t" style="right:34px;top:974.92px;font-size:29.5px;color:#222;font-weight:normal;">$<span style="letter-spacing:1.90px">7</span><span style="letter-spacing:1.90px">4</span><span style="letter-spacing:-2.60px">,</span><span style="letter-spacing:1.90px">3</span><span style="letter-spacing:1.90px">0</span><span style="letter-spacing:1.90px">0</span><span style="letter-spacing:-2.60px">.</span><span style="letter-spacing:1.90px">0</span>0</div>
<div style="position:absolute;left:400px;top:1128px;width:2462px;height:2px;background:#e6e6e6;"></div>
<div style="position:absolute;left:440.3px;top:1071.3px;width:20.4px;height:20.4px;border:1.5px solid #b9b9b9;border-radius:5px;background:#fff;box-shadow:inset 0 1px 1.5px rgba(0,0,0,0.12)"></div>
<div class="t" style="left:496px;top:1066.92px;font-size:29.5px;color:#222;font-weight:normal;"><svg width="10.5" height="21" viewBox="0 0 10.5 21" style="vertical-align:baseline;overflow:visible"><path d="M7.2,0.2 V21 M6.6,0.6 L1.6,6.6" stroke="currentColor" stroke-width="2.7" fill="none"/></svg><span style="letter-spacing:0.65px">3</span><span style="letter-spacing:1.50px">/</span><span style="letter-spacing:0.65px">0</span><span style="letter-spacing:0.65px">2</span><span style="letter-spacing:1.50px">/</span><span style="letter-spacing:0.65px">2</span><span style="letter-spacing:0.65px">0</span><svg width="10.5" height="21" viewBox="0 0 10.5 21" style="vertical-align:baseline;overflow:visible"><path d="M7.2,0.2 V21 M6.6,0.6 L1.6,6.6" stroke="currentColor" stroke-width="2.7" fill="none"/></svg>7</div>
<div class="t" style="left:760px;top:1066.92px;font-size:29.5px;color:#0b6cce;font-weight:normal;">SO-<span style="letter-spacing:0.60px">0</span><span style="letter-spacing:0.60px">0</span><svg width="10.5" height="21" viewBox="0 0 10.5 21" style="vertical-align:baseline;overflow:visible"><path d="M7.2,0.2 V21 M6.6,0.6 L1.6,6.6" stroke="currentColor" stroke-width="2.7" fill="none"/></svg><svg width="10.5" height="21" viewBox="0 0 10.5 21" style="vertical-align:baseline;overflow:visible"><path d="M7.2,0.2 V21 M6.6,0.6 L1.6,6.6" stroke="currentColor" stroke-width="2.7" fill="none"/></svg>4</div>
<div class="t" style="left:1288px;top:1066.92px;font-size:29.5px;color:#222;font-weight:normal;">Aaron Clark</div>
<div class="t" style="left:1552px;top:1067.23px;font-size:24.2px;color:#179000;font-weight:normal;-webkit-text-stroke:0.5px #179000;">CLOSED</div>
<div class="t" style="right:34px;top:1066.92px;font-size:29.5px;color:#222;font-weight:normal;">$<span style="letter-spacing:1.90px">5</span><span style="letter-spacing:1.90px">4</span><span style="letter-spacing:-2.60px">.</span><span style="letter-spacing:1.90px">0</span>8</div>
<div style="position:absolute;left:400px;top:1220px;width:2462px;height:2px;background:#e6e6e6;"></div>
<div style="position:absolute;left:440.3px;top:1163.3px;width:20.4px;height:20.4px;border:1.5px solid #b9b9b9;border-radius:5px;background:#fff;box-shadow:inset 0 1px 1.5px rgba(0,0,0,0.12)"></div>
<div class="t" style="left:496px;top:1158.92px;font-size:29.5px;color:#222;font-weight:normal;"><svg width="10.5" height="21" viewBox="0 0 10.5 21" style="vertical-align:baseline;overflow:visible"><path d="M7.2,0.2 V21 M6.6,0.6 L1.6,6.6" stroke="currentColor" stroke-width="2.7" fill="none"/></svg><span style="letter-spacing:0.65px">0</span><span style="letter-spacing:1.50px">/</span><span style="letter-spacing:0.65px">0</span><span style="letter-spacing:0.65px">2</span><span style="letter-spacing:1.50px">/</span><span style="letter-spacing:0.65px">2</span><span style="letter-spacing:0.65px">0</span><svg width="10.5" height="21" viewBox="0 0 10.5 21" style="vertical-align:baseline;overflow:visible"><path d="M7.2,0.2 V21 M6.6,0.6 L1.6,6.6" stroke="currentColor" stroke-width="2.7" fill="none"/></svg>7</div>
<div class="t" style="left:760px;top:1158.92px;font-size:29.5px;color:#0b6cce;font-weight:normal;">SO-<span style="letter-spacing:0.60px">0</span><span style="letter-spacing:0.60px">0</span><svg width="10.5" height="21" viewBox="0 0 10.5 21" style="vertical-align:baseline;overflow:visible"><path d="M7.2,0.2 V21 M6.6,0.6 L1.6,6.6" stroke="currentColor" stroke-width="2.7" fill="none"/></svg><svg width="10.5" height="21" viewBox="0 0 10.5 21" style="vertical-align:baseline;overflow:visible"><path d="M7.2,0.2 V21 M6.6,0.6 L1.6,6.6" stroke="currentColor" stroke-width="2.7" fill="none"/></svg>3</div>
<div class="t" style="left:1288px;top:1158.92px;font-size:29.5px;color:#222;font-weight:normal;">Aaron Clark</div>
<div class="t" style="left:1552px;top:1159.23px;font-size:24.2px;color:#179000;font-weight:normal;-webkit-text-stroke:0.5px #179000;">CLOSED</div>
<div class="t" style="right:34px;top:1158.92px;font-size:29.5px;color:#222;font-weight:normal;">$<span style="letter-spacing:1.90px">5</span><span style="letter-spacing:1.90px">4</span><span style="letter-spacing:-2.60px">.</span><span style="letter-spacing:1.90px">0</span>8</div>
<div style="position:absolute;left:400px;top:1312px;width:2462px;height:2px;background:#e6e6e6;"></div>
<div style="position:absolute;left:440.3px;top:1255.3px;width:20.4px;height:20.4px;border:1.5px solid #b9b9b9;border-radius:5px;background:#fff;box-shadow:inset 0 1px 1.5px rgba(0,0,0,0.12)"></div>
<div class="t" style="left:496px;top:1250.92px;font-size:29.5px;color:#222;font-weight:normal;"><span style="letter-spacing:0.65px">0</span><span style="letter-spacing:0.65px">8</span><span style="letter-spacing:1.50px">/</span><span style="letter-spacing:0.65px">0</span><span style="letter-spacing:0.65px">2</span><span style="letter-spacing:1.50px">/</span><span style="letter-spacing:0.65px">2</span><span style="letter-spacing:0.65px">0</span><svg width="10.5" height="21" viewBox="0 0 10.5 21" style="vertical-align:baseline;overflow:visible"><path d="M7.2,0.2 V21 M6.6,0.6 L1.6,6.6" stroke="currentColor" stroke-width="2.7" fill="none"/></svg>7</div>
<div class="t" style="left:760px;top:1250.92px;font-size:29.5px;color:#0b6cce;font-weight:normal;">SO-<span style="letter-spacing:0.60px">0</span><span style="letter-spacing:0.60px">0</span><svg width="10.5" height="21" viewBox="0 0 10.5 21" style="vertical-align:baseline;overflow:visible"><path d="M7.2,0.2 V21 M6.6,0.6 L1.6,6.6" stroke="currentColor" stroke-width="2.7" fill="none"/></svg><svg width="10.5" height="21" viewBox="0 0 10.5 21" style="vertical-align:baseline;overflow:visible"><path d="M7.2,0.2 V21 M6.6,0.6 L1.6,6.6" stroke="currentColor" stroke-width="2.7" fill="none"/></svg>2</div>
<div class="t" style="left:1288px;top:1250.92px;font-size:29.5px;color:#222;font-weight:normal;">Aaron Clark</div>
<div class="t" style="left:1552px;top:1251.23px;font-size:24.2px;color:#0a97e4;font-weight:normal;-webkit-text-stroke:0.5px #0a97e4;">CONFIRMED</div>
<div class="t" style="right:34px;top:1250.92px;font-size:29.5px;color:#222;font-weight:normal;">$<span style="letter-spacing:1.90px">5</span><span style="letter-spacing:1.90px">4</span><span style="letter-spacing:-2.60px">.</span><span style="letter-spacing:1.90px">0</span>8</div>
<div style="position:absolute;left:400px;top:1404px;width:2462px;height:2px;background:#e6e6e6;"></div>
<div style="position:absolute;left:440.3px;top:1347.3px;width:20.4px;height:20.4px;border:1.5px solid #b9b9b9;border-radius:5px;background:#fff;box-shadow:inset 0 1px 1.5px rgba(0,0,0,0.12)"></div>
<div class="t" style="left:496px;top:1342.92px;font-size:29.5px;color:#222;font-weight:normal;"><span style="letter-spacing:0.65px">3</span><span style="letter-spacing:0.65px">0</span><span style="letter-spacing:1.50px">/</span><span style="letter-spacing:0.65px">0</span><svg width="10.5" height="21" viewBox="0 0 10.5 21" style="vertical-align:baseline;overflow:visible"><path d="M7.2,0.2 V21 M6.6,0.6 L1.6,6.6" stroke="currentColor" stroke-width="2.7" fill="none"/></svg><span style="letter-spacing:1.50px">/</span><span style="letter-spacing:0.65px">2</span><span style="letter-spacing:0.65px">0</span><svg width="10.5" height="21" viewBox="0 0 10.5 21" style="vertical-align:baseline;overflow:visible"><path d="M7.2,0.2 V21 M6.6,0.6 L1.6,6.6" stroke="currentColor" stroke-width="2.7" fill="none"/></svg>7</div>
<div class="t" style="left:760px;top:1342.92px;font-size:29.5px;color:#0b6cce;font-weight:normal;">SO-<span style="letter-spacing:0.60px">0</span><span style="letter-spacing:0.60px">0</span><svg width="10.5" height="21" viewBox="0 0 10.5 21" style="vertical-align:baseline;overflow:visible"><path d="M7.2,0.2 V21 M6.6,0.6 L1.6,6.6" stroke="currentColor" stroke-width="2.7" fill="none"/></svg><svg width="10.5" height="21" viewBox="0 0 10.5 21" style="vertical-align:baseline;overflow:visible"><path d="M7.2,0.2 V21 M6.6,0.6 L1.6,6.6" stroke="currentColor" stroke-width="2.7" fill="none"/></svg><svg width="10.5" height="21" viewBox="0 0 10.5 21" style="vertical-align:baseline;overflow:visible"><path d="M7.2,0.2 V21 M6.6,0.6 L1.6,6.6" stroke="currentColor" stroke-width="2.7" fill="none"/></svg></div>
<div class="t" style="left:1288px;top:1342.92px;font-size:29.5px;color:#222;font-weight:normal;">Andrew Dobson</div>
<div class="t" style="left:1552px;top:1343.23px;font-size:24.2px;color:#0a97e4;font-weight:normal;-webkit-text-stroke:0.5px #0a97e4;">CONFIRMED</div>
<div class="t" style="right:34px;top:1342.92px;font-size:29.5px;color:#222;font-weight:normal;">$<span style="letter-spacing:1.90px">5</span><span style="letter-spacing:1.90px">7</span><span style="letter-spacing:1.90px">2</span><span style="letter-spacing:-2.60px">,</span><span style="letter-spacing:1.90px">0</span><span style="letter-spacing:1.90px">2</span><span style="letter-spacing:1.90px">0</span><span style="letter-spacing:-2.60px">.</span><span style="letter-spacing:1.90px">0</span>0</div>
<div style="position:absolute;left:400px;top:1496px;width:2462px;height:2px;background:#e6e6e6;"></div>
<div style="position:absolute;left:440.3px;top:1439.3px;width:20.4px;height:20.4px;border:1.5px solid #b9b9b9;border-radius:5px;background:#fff;box-shadow:inset 0 1px 1.5px rgba(0,0,0,0.12)"></div>
<div class="t" style="left:496px;top:1434.92px;font-size:29.5px;color:#222;font-weight:normal;"><span style="letter-spacing:0.65px">2</span><span style="letter-spacing:0.65px">5</span><span style="letter-spacing:1.50px">/</span><span style="letter-spacing:0.65px">0</span><svg width="10.5" height="21" viewBox="0 0 10.5 21" style="vertical-align:baseline;overflow:visible"><path d="M7.2,0.2 V21 M6.6,0.6 L1.6,6.6" stroke="currentColor" stroke-width="2.7" fill="none"/></svg><span style="letter-spacing:1.50px">/</span><span style="letter-spacing:0.65px">2</span><span style="letter-spacing:0.65px">0</span><svg width="10.5" height="21" viewBox="0 0 10.5 21" style="vertical-align:baseline;overflow:visible"><path d="M7.2,0.2 V21 M6.6,0.6 L1.6,6.6" stroke="currentColor" stroke-width="2.7" fill="none"/></svg>7</div>
<div class="t" style="left:760px;top:1434.92px;font-size:29.5px;color:#0b6cce;font-weight:normal;">SO-<span style="letter-spacing:0.60px">0</span><span style="letter-spacing:0.60px">0</span><svg width="10.5" height="21" viewBox="0 0 10.5 21" style="vertical-align:baseline;overflow:visible"><path d="M7.2,0.2 V21 M6.6,0.6 L1.6,6.6" stroke="currentColor" stroke-width="2.7" fill="none"/></svg><svg width="10.5" height="21" viewBox="0 0 10.5 21" style="vertical-align:baseline;overflow:visible"><path d="M7.2,0.2 V21 M6.6,0.6 L1.6,6.6" stroke="currentColor" stroke-width="2.7" fill="none"/></svg>0</div>
<div class="t" style="left:1288px;top:1434.92px;font-size:29.5px;color:#222;font-weight:normal;">Aaron Clark</div>
<div class="t" style="left:1552px;top:1435.23px;font-size:24.2px;color:#0a97e4;font-weight:normal;-webkit-text-stroke:0.5px #0a97e4;">ON HOLD</div>
<div class="t" style="right:34px;top:1434.92px;font-size:29.5px;color:#222;font-weight:normal;">$<span style="letter-spacing:1.90px">2</span><span style="letter-spacing:-2.60px">,</span><span style="letter-spacing:1.90px">7</span><span style="letter-spacing:1.90px">5</span><span style="letter-spacing:1.90px">6</span><span style="letter-spacing:-2.60px">.</span><span style="letter-spacing:1.90px">0</span>0</div>
<div style="position:absolute;left:400px;top:1588px;width:2462px;height:2px;background:#e6e6e6;"></div>
<div style="position:absolute;left:440.3px;top:1531.3px;width:20.4px;height:20.4px;border:1.5px solid #b9b9b9;border-radius:5px;background:#fff;box-shadow:inset 0 1px 1.5px rgba(0,0,0,0.12)"></div>
<div class="t" style="left:496px;top:1526.92px;font-size:29.5px;color:#222;font-weight:normal;"><span style="letter-spacing:0.65px">2</span><span style="letter-spacing:0.65px">5</span><span style="letter-spacing:1.50px">/</span><span style="letter-spacing:0.65px">0</span><svg width="10.5" height="21" viewBox="0 0 10.5 21" style="vertical-align:baseline;overflow:visible"><path d="M7.2,0.2 V21 M6.6,0.6 L1.6,6.6" stroke="currentColor" stroke-width="2.7" fill="none"/></svg><span style="letter-spacing:1.50px">/</span><span style="letter-spacing:0.65px">2</span><span style="letter-spacing:0.65px">0</span><svg width="10.5" height="21" viewBox="0 0 10.5 21" style="vertical-align:baseline;overflow:visible"><path d="M7.2,0.2 V21 M6.6,0.6 L1.6,6.6" stroke="currentColor" stroke-width="2.7" fill="none"/></svg>7</div>
<div class="t" style="left:760px;top:1526.92px;font-size:29.5px;color:#0b6cce;font-weight:normal;">SO-<span style="letter-spacing:0.60px">0</span><span style="letter-spacing:0.60px">0</span><svg width="10.5" height="21" viewBox="0 0 10.5 21" style="vertical-align:baseline;overflow:visible"><path d="M7.2,0.2 V21 M6.6,0.6 L1.6,6.6" stroke="currentColor" stroke-width="2.7" fill="none"/></svg><span style="letter-spacing:0.60px">0</span>9</div>
<div class="t" style="left:1288px;top:1526.92px;font-size:29.5px;color:#222;font-weight:normal;">Aaron Clark</div>
<div class="t" style="left:1552px;top:1527.23px;font-size:24.2px;color:#0a97e4;font-weight:normal;-webkit-text-stroke:0.5px #0a97e4;">CONFIRMED</div>
<div class="t" style="right:34px;top:1526.92px;font-size:29.5px;color:#222;font-weight:normal;">$<svg width="10.5" height="21" viewBox="0 0 10.5 21" style="vertical-align:baseline;overflow:visible"><path d="M7.2,0.2 V21 M6.6,0.6 L1.6,6.6" stroke="currentColor" stroke-width="2.7" fill="none"/></svg><span style="letter-spacing:1.90px">2</span><svg width="10.5" height="21" viewBox="0 0 10.5 21" style="vertical-align:baseline;overflow:visible"><path d="M7.2,0.2 V21 M6.6,0.6 L1.6,6.6" stroke="currentColor" stroke-width="2.7" fill="none"/></svg><span style="letter-spacing:-2.60px">.</span><span style="letter-spacing:1.90px">6</span>8</div>
<div style="position:absolute;left:400px;top:1680px;width:2462px;height:2px;background:#e6e6e6;"></div>
<div style="position:absolute;left:440.3px;top:1623.3px;width:20.4px;height:20.4px;border:1.5px solid #b9b9b9;border-radius:5px;background:#fff;box-shadow:inset 0 1px 1.5px rgba(0,0,0,0.12)"></div>
<div class="t" style="left:496px;top:1618.92px;font-size:29.5px;color:#222;font-weight:normal;"><span style="letter-spacing:0.65px">2</span><span style="letter-spacing:0.65px">5</span><span style="letter-spacing:1.50px">/</span><span style="letter-spacing:0.65px">0</span><svg width="10.5" height="21" viewBox="0 0 10.5 21" style="vertical-align:baseline;overflow:visible"><path d="M7.2,0.2 V21 M6.6,0.6 L1.6,6.6" stroke="currentColor" stroke-width="2.7" fill="none"/></svg><span style="letter-spacing:1.50px">/</span><span style="letter-spacing:0.65px">2</span><span style="letter-spacing:0.65px">0</span><svg width="10.5" height="21" viewBox="0 0 10.5 21" style="vertical-align:baseline;overflow:visible"><path d="M7.2,0.2 V21 M6.6,0.6 L1.6,6.6" stroke="currentColor" stroke-width="2.7" fill="none"/></svg>7</div>
<div class="t" style="left:760px;top:1618.92px;font-size:29.5px;color:#0b6cce;font-weight:normal;">SO-<span style="letter-spacing:0.60px">0</span><span style="letter-spacing:0.60px">0</span><svg width="10.5" height="21" viewBox="0 0 10.5 21" style="vertical-align:baseline;overflow:visible"><path d="M7.2,0.2 V21 M6.6,0.6 L1.6,6.6" stroke="currentColor" stroke-width="2.7" fill="none"/></svg><span style="letter-spacing:0.60px">0</span>8</div>
<div class="t" style="left:1288px;top:1618.92px;font-size:29.5px;color:#222;font-weight:normal;">Aaron Clark</div>
<div class="t" style="left:1552px;top:1619.23px;font-size:24.2px;color:#0a97e4;font-weight:normal;-webkit-text-stroke:0.5px #0a97e4;">ON HOLD</div>
<div class="t" style="right:34px;top:1618.92px;font-size:29.5px;color:#222;font-weight:normal;">$<span style="letter-spacing:1.90px">5</span><span style="letter-spacing:1.90px">4</span><span style="letter-spacing:-2.60px">.</span><span style="letter-spacing:1.90px">0</span>8</div>
<svg style="position:absolute;left:0;top:0;" width="2880" height="1650" viewBox="0 0 2880 1650"><circle cx="1931.5" cy="347" r="10" fill="#ebebeb"/><circle cx="2196" cy="347" r="10" fill="#0093e5"/><circle cx="2463" cy="347" r="10" fill="#22b60d"/><circle cx="1931.5" cy="439" r="10" fill="#ebebeb"/><circle cx="2196" cy="439" r="10" fill="#0093e5"/><circle cx="2463" cy="439" r="10" fill="#ebebeb"/><circle cx="1931.5" cy="531" r="10" fill="#ebebeb"/><circle cx="2196" cy="531" r="10" fill="#0093e5"/><circle cx="2463" cy="531" r="10" fill="#0093e5"/><circle cx="1931.5" cy="623" r="10" fill="#ebebeb"/><circle cx="2196" cy="623" r="10" fill="#0093e5"/><circle cx="2463" cy="623" r="10" fill="#22b60d"/><g fill="none" stroke="#0a7fc3" stroke-width="2"><rect x="1762.5" y="703" width="20.5" height="20.5" rx="2"/>
<polyline points="1769.5,703 1769.5,710 1772.5,707.5 1775.5,710 1775.5,703"/>
<line x1="1753.5" y1="704" x2="1759" y2="704" stroke-width="1.6"/><line x1="1755" y1="708" x2="1759" y2="708" stroke-width="1.6"/></g><circle cx="1931.5" cy="715" r="10" fill="#ebebeb"/><circle cx="2196" cy="715" r="10" fill="#ebebeb"/><circle cx="2463" cy="715" r="10" fill="#ebebeb"/><circle cx="1931.5" cy="807" r="10" fill="#ebebeb"/><circle cx="2196" cy="807" r="10" fill="#0093e5"/><circle cx="2463" cy="807" r="10" fill="#ebebeb"/><g fill="none" stroke="#0a7fc3" stroke-width="2"><rect x="1762.5" y="887" width="20.5" height="20.5" rx="2"/>
<polyline points="1769.5,887 1769.5,894 1772.5,891.5 1775.5,894 1775.5,887"/>
<line x1="1753.5" y1="888" x2="1759" y2="888" stroke-width="1.6"/><line x1="1755" y1="892" x2="1759" y2="892" stroke-width="1.6"/></g><circle cx="1931.5" cy="899" r="10" fill="#ebebeb"/><circle cx="2196" cy="899" r="10" fill="#0093e5"/><circle cx="2463" cy="899" r="10" fill="#22b60d"/><circle cx="1931.5" cy="991" r="10" fill="#ebebeb"/><circle cx="2196" cy="991" r="10" fill="#0093e5"/><circle cx="2463" cy="991" r="10" fill="#ebebeb"/><path d="M2463,981 A10,10 0 0 0 2463,1001 Z" fill="#0093e5"/><circle cx="1931.5" cy="1083" r="10" fill="#0093e5"/><circle cx="2196" cy="1083" r="10" fill="#0093e5"/><circle cx="2463" cy="1083" r="10" fill="#22b60d"/><circle cx="1931.5" cy="1175" r="10" fill="#0093e5"/><circle cx="2196" cy="1175" r="10" fill="#0093e5"/><circle cx="2463" cy="1175" r="10" fill="#22b60d"/><g fill="none" stroke="#0a7fc3" stroke-width="2"><rect x="1762.5" y="1255" width="20.5" height="20.5" rx="2"/>
<polyline points="1769.5,1255 1769.5,1262 1772.5,1259.5 1775.5,1262 1775.5,1255"/>
<line x1="1753.5" y1="1256" x2="1759" y2="1256" stroke-width="1.6"/><line x1="1755" y1="1260" x2="1759" y2="1260" stroke-width="1.6"/></g><circle cx="1931.5" cy="1267" r="10" fill="#ebebeb"/><circle cx="2196" cy="1267" r="10" fill="#0093e5"/><circle cx="2463" cy="1267" r="10" fill="#22b60d"/><g fill="none" stroke="#0a7fc3" stroke-width="2"><rect x="1762.5" y="1347" width="20.5" height="20.5" rx="2"/>
<polyline points="1769.5,1347 1769.5,1354 1772.5,1351.5 1775.5,1354 1775.5,1347"/>
<line x1="1753.5" y1="1348" x2="1759" y2="1348" stroke-width="1.6"/><line x1="1755" y1="1352" x2="1759" y2="1352" stroke-width="1.6"/></g><circle cx="1931.5" cy="1359" r="10" fill="#ebebeb"/><circle cx="2196" cy="1359" r="10" fill="#0093e5"/><circle cx="2463" cy="1359" r="10" fill="#ebebeb"/><g fill="none" stroke="#0a7fc3" stroke-width="2"><rect x="1762.5" y="1439" width="20.5" height="20.5" rx="2"/>
<polyline points="1769.5,1439 1769.5,1446 1772.5,1443.5 1775.5,1446 1775.5,1439"/>
<line x1="1753.5" y1="1440" x2="1759" y2="1440" stroke-width="1.6"/><line x1="1755" y1="1444" x2="1759" y2="1444" stroke-width="1.6"/></g><circle cx="1931.5" cy="1451" r="10" fill="#ebebeb"/><circle cx="2196" cy="1451" r="10" fill="#ebebeb"/><circle cx="2463" cy="1451" r="10" fill="#ebebeb"/><g fill="none" stroke="#0a7fc3" stroke-width="2"><rect x="1762.5" y="1531" width="20.5" height="20.5" rx="2"/>
<polyline points="1769.5,1531 1769.5,1538 1772.5,1535.5 1775.5,1538 1775.5,1531"/>
<line x1="1753.5" y1="1532" x2="1759" y2="1532" stroke-width="1.6"/><line x1="1755" y1="1536" x2="1759" y2="1536" stroke-width="1.6"/></g><circle cx="1931.5" cy="1543" r="10" fill="#ebebeb"/><path d="M1931.5,1533 A10,10 0 0 0 1931.5,1553 Z" fill="#0093e5"/><circle cx="2196" cy="1543" r="10" fill="#ebebeb"/><circle cx="2463" cy="1543" r="10" fill="#ebebeb"/><g fill="none" stroke="#0a7fc3" stroke-width="2"><rect x="1762.5" y="1623" width="20.5" height="20.5" rx="2"/>
<polyline points="1769.5,1623 1769.5,1630 1772.5,1627.5 1775.5,1630 1775.5,1623"/>
<line x1="1753.5" y1="1624" x2="1759" y2="1624" stroke-width="1.6"/><line x1="1755" y1="1628" x2="1759" y2="1628" stroke-width="1.6"/></g><circle cx="1931.5" cy="1635" r="10" fill="#ebebeb"/><circle cx="2196" cy="1635" r="10" fill="#ebebeb"/><circle cx="2463" cy="1635" r="10" fill="#ebebeb"/></svg>
<div style="position:absolute;left:436px;top:200px;width:396px;height:884px;border:2px solid #c6c6c6;border-radius:4px;background:#fff;box-shadow:0 8px 22px rgba(0,0,0,0.22)"></div>
<div style="position:absolute;left:818px;top:212px;width:16px;height:746px;background:#dedede;"></div>
<div style="position:absolute;left:438px;top:1010px;width:380px;height:2px;background:#dcdcdc;"></div>
<div style="position:absolute;left:818px;top:1010px;width:16px;height:2px;background:#dcdcdc;"></div>
<div style="position:absolute;left:438px;top:634px;width:380px;height:53.5px;background:#0590e2;"></div>
<div class="t" style="left:478.5px;top:221.56px;font-size:21.7px;color:#8c8c8c;font-weight:normal;-webkit-text-stroke:0.4px #8c8c8c;">DEFAULT FILTERS</div>
<div class="t" style="left:478.5px;top:266.93px;font-size:29.5px;color:#2a2a2a;font-weight:normal;-webkit-text-stroke:0.25px #2a2a2a;">All</div>
<div class="t" style="left:478.5px;top:320.93px;font-size:29.5px;color:#2a2a2a;font-weight:normal;-webkit-text-stroke:0.25px #2a2a2a;">Draft</div>
<div class="t" style="left:478.5px;top:374.93px;font-size:29.5px;color:#2a2a2a;font-weight:normal;-webkit-text-stroke:0.25px #2a2a2a;">Confirmed</div>
<div class="t" style="left:478.5px;top:428.93px;font-size:29.5px;color:#2a2a2a;font-weight:normal;-webkit-text-stroke:0.25px #2a2a2a;">For Packaging</div>
<div class="t" style="left:478.5px;top:482.93px;font-size:29.5px;color:#2a2a2a;font-weight:normal;-webkit-text-stroke:0.25px #2a2a2a;">To be Shipped</div>
<div class="t" style="left:478.5px;top:536.92px;font-size:29.5px;color:#2a2a2a;font-weight:normal;-webkit-text-stroke:0.25px #2a2a2a;">Shipped</div>
<div class="t" style="left:478.5px;top:590.92px;font-size:29.5px;color:#2a2a2a;font-weight:normal;-webkit-text-stroke:0.25px #2a2a2a;">For Invoicing</div>
<div class="t" style="left:478.5px;top:644.92px;font-size:29.5px;color:#fff;font-weight:normal;-webkit-text-stroke:0.25px #fff;">Drop Shipped</div>
<div class="t" style="left:478.5px;top:698.92px;font-size:29.5px;color:#2a2a2a;font-weight:normal;-webkit-text-stroke:0.25px #2a2a2a;">Backorder</div>
<div class="t" style="left:478.5px;top:752.92px;font-size:29.5px;color:#2a2a2a;font-weight:normal;-webkit-text-stroke:0.25px #2a2a2a;">Onhold</div>
<div class="t" style="left:478.5px;top:806.92px;font-size:29.5px;color:#2a2a2a;font-weight:normal;-webkit-text-stroke:0.25px #2a2a2a;">Fulfilled</div>
<div class="t" style="left:478.5px;top:860.92px;font-size:29.5px;color:#2a2a2a;font-weight:normal;-webkit-text-stroke:0.25px #2a2a2a;">Closed</div>
<div class="t" style="left:478.5px;top:914.92px;font-size:29.5px;color:#2a2a2a;font-weight:normal;-webkit-text-stroke:0.25px #2a2a2a;">Marketplace</div>
<div class="t" style="left:478.5px;top:968.92px;font-size:29.5px;color:#2a2a2a;font-weight:normal;-webkit-text-stroke:0.25px #2a2a2a;">Void</div>
<svg style="position:absolute;left:0;top:0;" width="2880" height="1650" viewBox="0 0 2880 1650"><g stroke="#111" stroke-width="2.8"><line x1="498" y1="1030.5" x2="498" y2="1057.5"/><line x1="484" y1="1044" x2="512" y2="1044"/></g></svg>
<div class="t" style="left:527px;top:1032.42px;font-size:29.5px;color:#2a2a2a;font-weight:normal;">New Custom View</div>
</div></body></html>
